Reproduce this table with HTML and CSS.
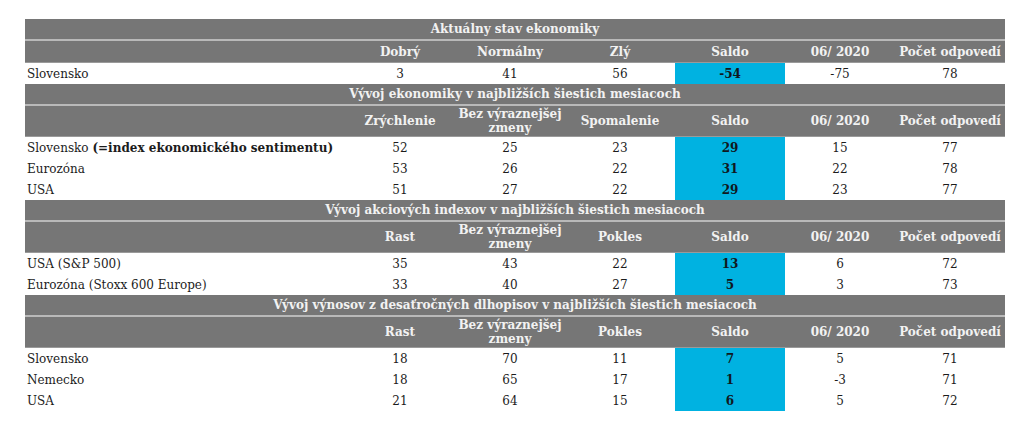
FILE: index.html
```html
<!DOCTYPE html>
<html lang="sk">
<head>
<meta charset="utf-8">
<title>Ekonomický sentiment</title>
<link rel="stylesheet" href="styles.css">
</head>
<body>
<table class="survey">
  <colgroup>
    <col class="c-label"><col class="c-num"><col class="c-num"><col class="c-num"><col class="c-num"><col class="c-num"><col class="c-num">
  </colgroup>
  <tbody>
    <tr class="title"><th colspan="7">Aktuálny stav ekonomiky</th></tr>
    <tr class="head"><th></th><th>Dobrý</th><th>Normálny</th><th>Zlý</th><th>Saldo</th><th>06/ 2020</th><th>Počet odpovedí</th></tr>
    <tr class="data"><td class="label">Slovensko</td><td>3</td><td>41</td><td>56</td><td class="saldo">-54</td><td>-75</td><td>78</td></tr>

    <tr class="title"><th colspan="7">Vývoj ekonomiky v najbližších šiestich mesiacoch</th></tr>
    <tr class="head tall"><th></th><th>Zrýchlenie</th><th>Bez výraznejšej<br>zmeny</th><th>Spomalenie</th><th>Saldo</th><th>06/ 2020</th><th>Počet odpovedí</th></tr>
    <tr class="data"><td class="label">Slovensko <b>(=index ekonomického sentimentu)</b></td><td>52</td><td>25</td><td>23</td><td class="saldo">29</td><td>15</td><td>77</td></tr>
    <tr class="data"><td class="label">Eurozóna</td><td>53</td><td>26</td><td>22</td><td class="saldo">31</td><td>22</td><td>78</td></tr>
    <tr class="data"><td class="label">USA</td><td>51</td><td>27</td><td>22</td><td class="saldo">29</td><td>23</td><td>77</td></tr>

    <tr class="title"><th colspan="7">Vývoj akciových indexov v najbližších šiestich mesiacoch</th></tr>
    <tr class="head tall"><th></th><th>Rast</th><th>Bez výraznejšej<br>zmeny</th><th>Pokles</th><th>Saldo</th><th>06/ 2020</th><th>Počet odpovedí</th></tr>
    <tr class="data"><td class="label">USA (S&amp;P 500)</td><td>35</td><td>43</td><td>22</td><td class="saldo">13</td><td>6</td><td>72</td></tr>
    <tr class="data"><td class="label">Eurozóna (Stoxx 600 Europe)</td><td>33</td><td>40</td><td>27</td><td class="saldo">5</td><td>3</td><td>73</td></tr>

    <tr class="title"><th colspan="7">Vývoj výnosov z desaťročných dlhopisov v najbližších šiestich mesiacoch</th></tr>
    <tr class="head tall"><th></th><th>Rast</th><th>Bez výraznejšej<br>zmeny</th><th>Pokles</th><th>Saldo</th><th>06/ 2020</th><th>Počet odpovedí</th></tr>
    <tr class="data"><td class="label">Slovensko</td><td>18</td><td>70</td><td>11</td><td class="saldo">7</td><td>5</td><td>71</td></tr>
    <tr class="data"><td class="label">Nemecko</td><td>18</td><td>65</td><td>17</td><td class="saldo">1</td><td>-3</td><td>71</td></tr>
    <tr class="data"><td class="label">USA</td><td>21</td><td>64</td><td>15</td><td class="saldo">6</td><td>5</td><td>72</td></tr>
  </tbody>
</table>
</body>
</html>
```

FILE: styles.css
```css
html, body {
  margin: 0;
  background: #ffffff;
}

body {
  padding: 19px 21px 0 25px;
  font-family: "DejaVu Serif", Georgia, "Liberation Serif", serif;
  font-size: 12px;
  color: #1c1c1c;
}

.survey {
  width: 978px;
  border-collapse: collapse;
  table-layout: fixed;
}

.c-label { width: 320px; }
.c-num { width: 110px; }

.survey th,
.survey td {
  padding: 0;
  text-align: center;
  vertical-align: middle;
}

.title th {
  background: #767676;
  color: #f2f2f2;
  font-weight: bold;
  height: 20px;
  line-height: 20px;
  border-bottom: 2px solid #b9b9b9;
}

.head th {
  background: #767676;
  color: #f2f2f2;
  font-weight: bold;
  height: 21px;
  line-height: 14px;
  border-bottom: 1px solid #9a9a9a;
}

.head.tall th {
  height: 30px;
}

.data td {
  height: 20.5px;
  line-height: 20px;
  padding-top: 1px;
  box-sizing: border-box;
  color: #1c1c1c;
}

.data td.label {
  text-align: left;
  padding-left: 2px;
  white-space: nowrap;
}

.data td.saldo {
  background: #00b2e1;
  font-weight: bold;
  color: #101820;
}
```
